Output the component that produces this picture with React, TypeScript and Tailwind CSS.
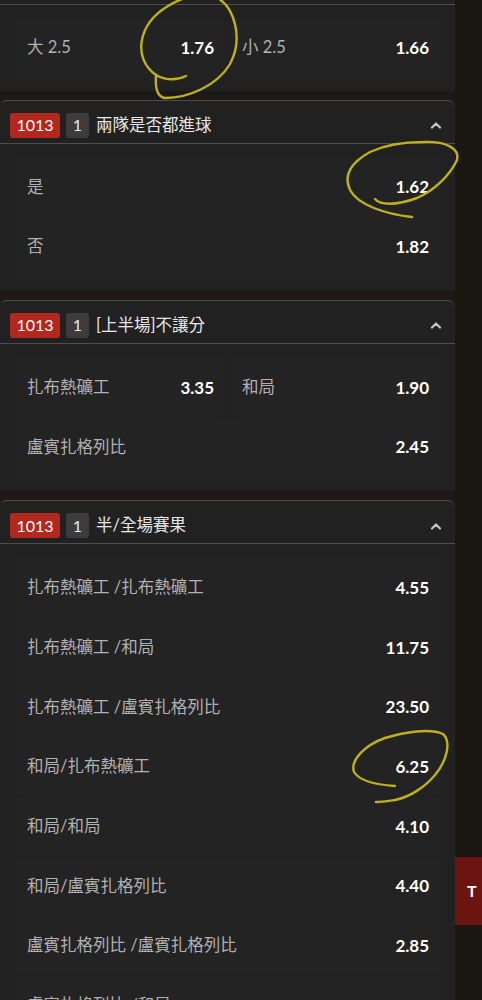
import { ReactNode } from 'react';

const font = { fontFamily: '"Lato", "Noto Sans CJK TC", "Noto Sans", sans-serif' };

type Pair = [string, string];

const halfFull: Pair[] = [
  ['扎布熱礦工 /扎布熱礦工', '4.55'],
  ['扎布熱礦工 /和局', '11.75'],
  ['扎布熱礦工 /盧賓扎格列比', '23.50'],
  ['和局/扎布熱礦工', '6.25'],
  ['和局/和局', '4.10'],
  ['和局/盧賓扎格列比', '4.40'],
  ['盧賓扎格列比 /盧賓扎格列比', '2.85'],
  ['盧賓扎格列比 /和局', '11.50'],
];

const Cell = ({ label, odds }: { label: string; odds: string }) => (
  <div className="flex-1 h-[59px] mb-[0.67px] bg-[#232323] rounded-[2px] flex items-center justify-between px-[11px]">
    <span className="text-[16.5px] text-[#b2b2b2]">{label}</span>
    <span className="text-[17px] font-bold text-white">{odds}</span>
  </div>
);

const Chevron = () => (
  <svg width="12" height="8" viewBox="0 0 12 8" fill="none">
    <path d="M2 6.5 L6 2.5 L10 6.5" stroke="#c4c4c4" strokeWidth="2.2" strokeLinecap="round" strokeLinejoin="round" />
  </svg>
);

const Card = ({ title, children }: { title: string; children: ReactNode }) => (
  <div className="bg-[#212121] border-t border-[#4c4c4c] rounded-t-[7px] mb-[10px]">
    <div className="h-[43px] pt-[7px] flex items-center pl-[10px] pr-[13px] border-b border-[#4e4e4e]">
      <span className="h-[25px] w-[50px] flex items-center justify-center bg-[#b2281e] rounded-[3px] text-white text-[16px]">1013</span>
      <span className="h-[25px] w-[23px] ml-[6px] flex items-center justify-center bg-[#3c3c3c] rounded-[3px] text-[#e8e8e8] text-[16px]">1</span>
      <span className="ml-[7px] text-[16.5px] text-[#e8e8e8]">{title}</span>
      <span className="ml-auto">
        <Chevron />
      </span>
    </div>
    <div className="pt-[14px] pb-[13px] pl-[16px] pr-[15px]">{children}</div>
  </div>
);

export default function App() {
  return (
    <div className="relative w-[482px] h-[1000px] overflow-hidden flex bg-[#1c1916]" style={font}>
      <div className="w-[455px] shrink-0">
        {/* bottom of the market above, header scrolled off */}
        <div className="bg-[#212121] mb-[9px]">
          <div className="h-[5px] border-b border-[#4e4e4e]" />
          <div className="pt-[13px] pb-[13px] pl-[16px] pr-[15px] flex gap-[6px]">
            <Cell label="大 2.5" odds="1.76" />
            <Cell label="小 2.5" odds="1.66" />
          </div>
        </div>

        <Card title="兩隊是否都進球">
          <Cell label="是" odds="1.62" />
          <Cell label="否" odds="1.82" />
        </Card>

        <Card title="[上半場]不讓分">
          <div className="flex gap-[6px]">
            <Cell label="扎布熱礦工" odds="3.35" />
            <Cell label="和局" odds="1.90" />
          </div>
          <div className="flex">
            <Cell label="盧賓扎格列比" odds="2.45" />
          </div>
        </Card>

        <Card title="半/全場賽果">
          {halfFull.map(([label, odds]) => (
            <div key={label} className="flex">
              <Cell label={label} odds={odds} />
            </div>
          ))}
        </Card>
      </div>

      <div className="flex-1 bg-[#1a1612]">
        <div className="mt-[857px] h-[68px] bg-[#6c1410] flex items-center pl-[12px] text-white text-[16px] font-bold">T</div>
      </div>

      {/* hand-drawn marks over the odds */}
      <svg className="absolute left-0 top-0 pointer-events-none" width="482" height="1000" fill="none">
        <g stroke="#bdb21c" strokeWidth="2.4" strokeLinecap="round" strokeLinejoin="round">
          <path d="M186,76 C176,81 164,80 156,75 C132,58 138,24 168,6 C176,1 184,-2 192,-4" />
          <path d="M214,-4 C236,6 243,40 230,64 C217,86 188,98 165,98 C157,97 155,88 156,75" />
          <path d="M375,199 C380,205 395,206 417,198 C435,190 450,175 457,160 C460,148 445,141 423,142 C405,142 385,145 370,152 C352,162 343,175 350,190 C358,205 385,214 412,217" />
          <path d="M395,786 C380,785 360,782 354,772 C350,760 365,745 385,738 C405,732 430,728 443,734 C452,742 446,762 435,775 C425,787 410,797 395,800 C388,801 382,802 376,802" />
        </g>
      </svg>
    </div>
  );
}
